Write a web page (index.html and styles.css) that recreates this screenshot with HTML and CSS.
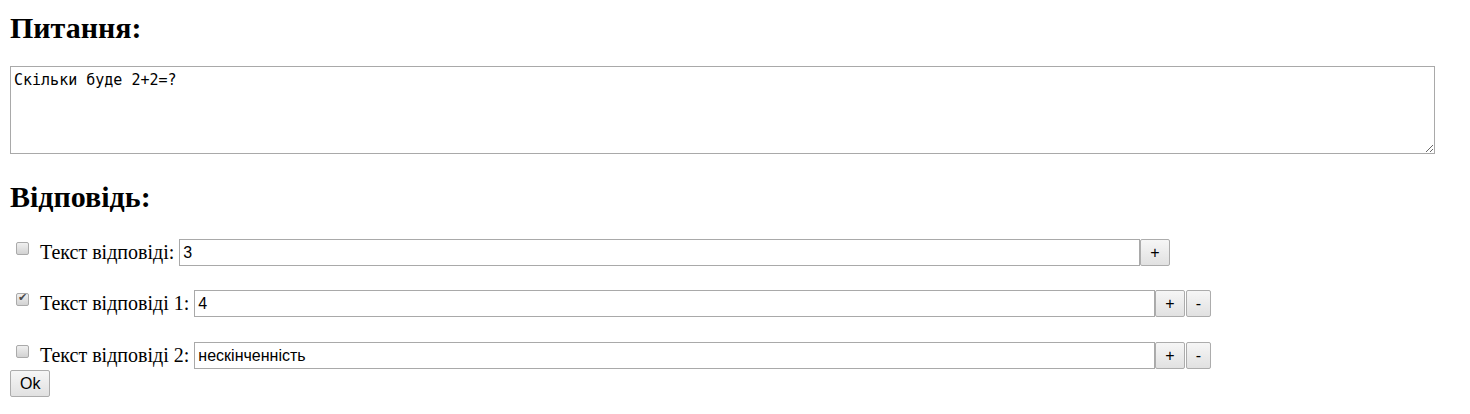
FILE: index.html
```html
<!DOCTYPE html>
<html lang="uk">
<head>
  <meta charset="UTF-8">
  <title>Питання</title>
  <link rel="stylesheet" href="styles.css">
</head>
<body>
  <div class="page">
    <h2 class="title">Питання:</h2>
    <textarea class="question" spellcheck="true">Скільки буде 2+2=?</textarea>

    <h2 class="title answers-title">Відповідь:</h2>
    <div class="answers">
      <div class="answer">
        <input type="checkbox" class="check">
        <label class="answer-label">Текст відповіді:</label>
        <input type="text" class="answer-input" value="3">
        <button class="btn">+</button>
      </div>
      <div class="answer">
        <input type="checkbox" class="check" checked>
        <label class="answer-label">Текст відповіді 1:</label>
        <input type="text" class="answer-input" value="4">
        <button class="btn">+</button>
        <button class="btn">-</button>
      </div>
      <div class="answer">
        <input type="checkbox" class="check">
        <label class="answer-label">Текст відповіді 2:</label>
        <input type="text" class="answer-input" value="нескінченність">
        <button class="btn">+</button>
        <button class="btn">-</button>
      </div>
    </div>
    <button class="btn ok-btn">Ok</button>
  </div>
</body>
</html>
```

FILE: styles.css
```css
* {
  box-sizing: border-box;
}

body {
  margin: 0;
  background: #fff;
  color: #000;
  font-family: "Liberation Serif", "Times New Roman", serif;
}

.page {
  padding: 10px 10px;
  display: flex;
  flex-direction: column;
  align-items: flex-start;
}

.title {
  margin: 0;
  font-size: 30px;
  line-height: 36px;
  font-weight: bold;
}

.question {
  margin-top: 20px;
  width: 1425px;
  height: 88px;
  border: 1px solid #a9a9a9;
  padding: 4px 3px;
  font-family: "DejaVu Sans Mono", "Liberation Mono", monospace;
  font-size: 15px;
  color: #000;
}

.answers-title {
  margin-top: 25px;
}

.answers {
  margin-top: 24px;
  display: flex;
  flex-direction: column;
  gap: 24px;
}

.answer {
  display: flex;
  align-items: center;
  height: 27px;
}

.answer:last-child {
  margin-top: 1px;
}

.check {
  appearance: none;
  -webkit-appearance: none;
  width: 13px;
  height: 13px;
  margin: 0 0 8px 6px;
  border: 1px solid #aaa;
  border-radius: 2px;
  background: linear-gradient(#f0f0f0, #d2d2d2);
  position: relative;
}

.check:checked::after {
  content: "✔";
  position: absolute;
  left: 1px;
  top: -3px;
  font-family: "DejaVu Sans", sans-serif;
  font-size: 11px;
  color: #4a4a4a;
}

.answer-label {
  margin-left: 11px;
  margin-right: 5px;
  font-size: 20px;
}

.answer-input {
  width: 961px;
  height: 27px;
  margin: 0;
  border: 1px solid #a9a9a9;
  padding: 0 3px;
  font-family: "Liberation Sans", Arial, sans-serif;
  font-size: 16px;
  color: #000;
}

.btn {
  height: 27px;
  margin: 0 1px 0 0;
  padding: 0 9px;
  border: 1px solid #acacac;
  border-radius: 2px;
  background: linear-gradient(#f6f6f6, #e1e1e1);
  font-family: "Liberation Sans", Arial, sans-serif;
  font-size: 16px;
  color: #000;
}

.ok-btn {
  margin-top: 1px;
}
```
